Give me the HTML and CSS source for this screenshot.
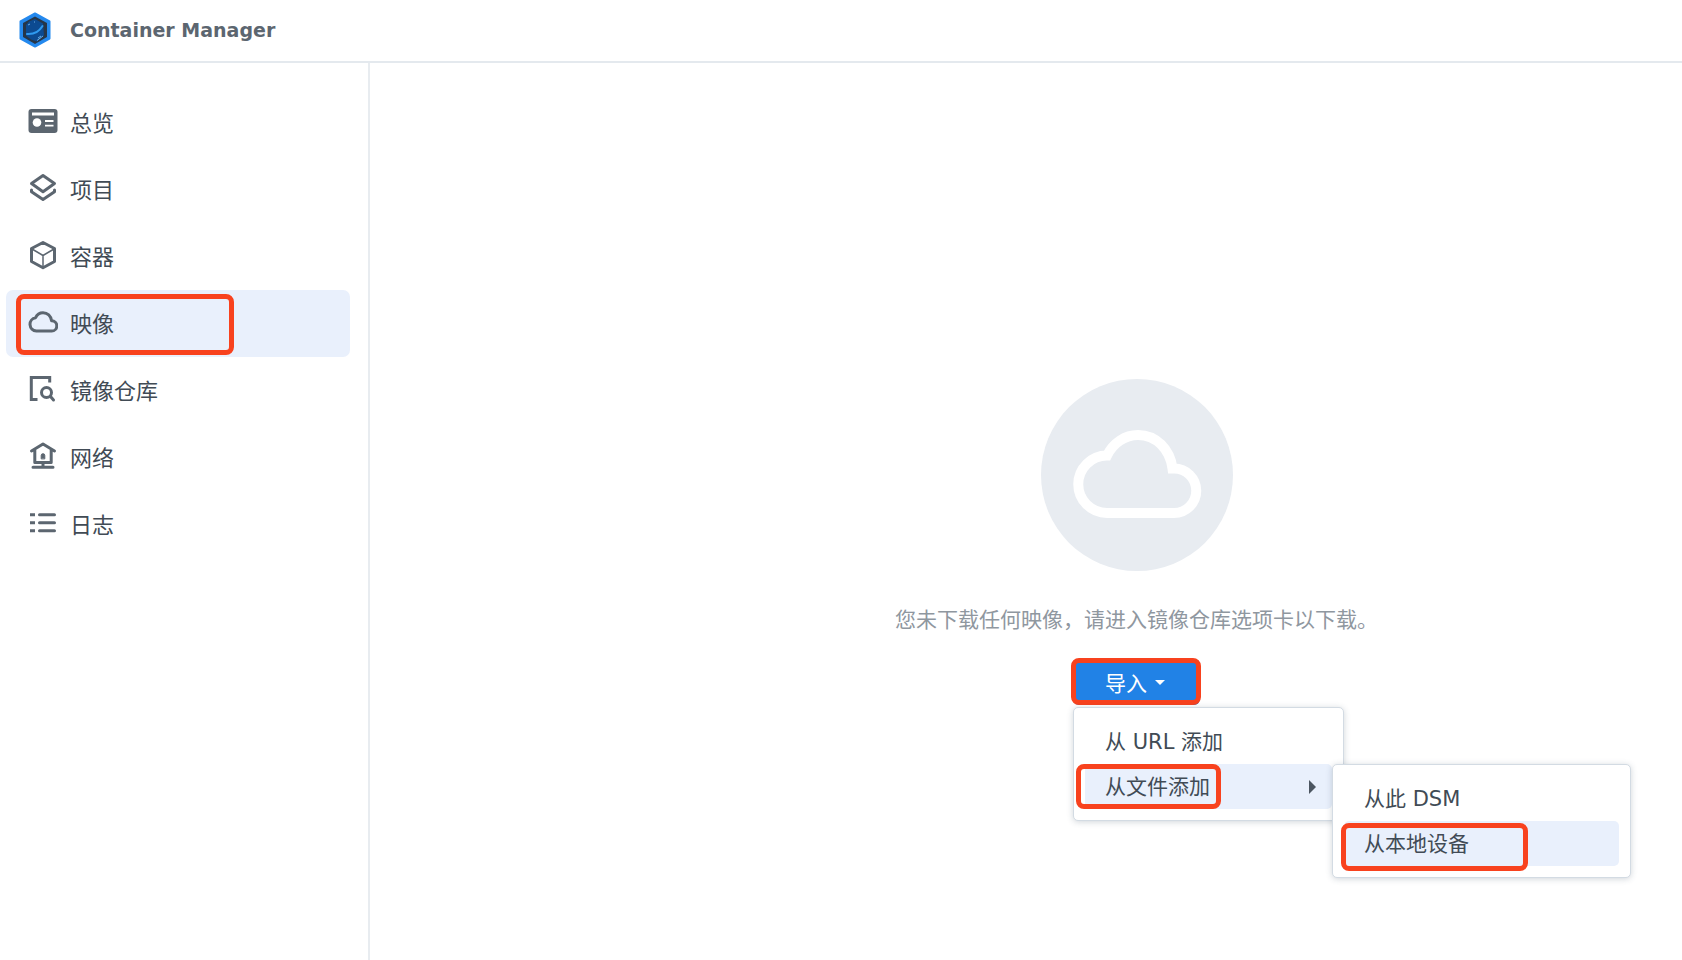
FILE: index.html
```html
<!DOCTYPE html>
<html lang="zh-CN">
<head>
<meta charset="utf-8">
<title>Container Manager</title>
<link rel="stylesheet" href="styles.css">
</head>
<body>
<div class="app">
  <header class="titlebar">
    <svg class="logo" viewBox="0 0 34 36" aria-hidden="true">
      <path d="M17 1.5 31.5 9.5v17L17 34.500 2.500 26.500v-17z" fill="#2489ee" stroke="#2489ee" stroke-width="2" stroke-linejoin="round"/>
      <path d="M17 4.500 29 11v14l-12 7-12-7V11z" fill="#263648"/>
      <path d="M11 9.500 17 7l8 4.500 1 12-7 6-6-2-5-4V13z" fill="#0c4a91"/>
      <path d="M9 22c7 .5 12-2 15.500-8" fill="none" stroke="#2f9af0" stroke-width="2" stroke-linecap="round"/>
      <path d="M19 28.500 25 24M20 26l3-2M10 13l2-1M16 10h1" fill="none" stroke="#69aee8" stroke-width="1"/>
    </svg>
    <h1 class="title">Container Manager</h1>
  </header>
  <div class="body">
    <nav class="sidebar">
      <a class="nav-item" href="#overview">
        <svg class="icon" viewBox="0 0 30 30" aria-hidden="true"><rect x="0.500" y="3" width="29" height="24" rx="3" fill="#5c6670"/><path d="M4 6.500h22v3H4z" fill="#fff"/><circle cx="9" cy="16.500" r="4.300" fill="#fff"/><path d="M17 15h8.500M17 19.700h8.500" stroke="#fff" stroke-width="1.800"/></svg>
        <span>总览</span>
      </a>
      <a class="nav-item" href="#project">
        <svg class="icon line" viewBox="0 0 30 30" aria-hidden="true"><path d="M15 2.500 26.500 10.500 15 18.700 3.500 10.500z"/><path d="M3.500 17v1.700L15 26.500l11.500-7.800V17"/></svg>
        <span>项目</span>
      </a>
      <a class="nav-item" href="#container">
        <svg class="icon line" viewBox="0 0 30 30" aria-hidden="true"><path d="M15 2.500 26.500 8.500v13L15 27.700 3.500 21.500v-13z"/><path d="M4 9l11 6.500L26 9M15 15.500V27" stroke-width="1.500"/></svg>
        <span>容器</span>
      </a>
      <a class="nav-item selected marked" href="#image" aria-current="page">
        <svg class="icon line" viewBox="0 0 30 30" aria-hidden="true"><path d="M7.600 10.700C9 7.500 11.700 5.700 15 5.700c4.500 0 7.800 3.300 8.600 8.100h.1a4.600 4.600 0 0 1 0 10.200H8.400a6.700 6.700 0 0 1-.8-13.300z"/></svg>
        <span>映像</span>
      </a>
      <a class="nav-item" href="#registry">
        <svg class="icon line" viewBox="0 0 30 30" aria-hidden="true"><path d="M9.500 25.500H3.300V3.500h18.400v5" stroke-linecap="butt" stroke-linejoin="miter"/><circle cx="18.500" cy="18.500" r="5" stroke-width="3"/><path d="M22.300 22.300 25.500 26" stroke-width="3"/></svg>
        <span>镜像仓库</span>
      </a>
      <a class="nav-item" href="#network">
        <svg class="icon line" viewBox="0 0 30 30" aria-hidden="true"><path d="M3.500 10 15 3l11.500 7M6.800 9v12.500h16.400V9M15 22v4M5 26.200h20"/><path d="M13.200 17.500v-3a1.800 1.800 0 0 1 3.600 0v3z" fill="#5c6670" stroke-width="1"/></svg>
        <span>网络</span>
      </a>
      <a class="nav-item" href="#log">
        <svg class="icon line" viewBox="0 0 30 30" aria-hidden="true"><path d="M2 6.700h5M2 14.700h5M2 22.700h5" stroke-linecap="butt" stroke-width="3"/><path d="M11.500 6.700h15M11.500 14.700h15M11.500 22.700h15" stroke-width="3"/></svg>
        <span>日志</span>
      </a>
    </nav>
    <main class="content">
      <section class="empty">
        <svg class="empty-art" viewBox="0 0 192 192" aria-hidden="true"><circle cx="96" cy="96" r="96" fill="#e8ecf1"/><path d="M66 76.500C72 64 84 56 97 56c18 0 32 14 34.500 33.500H133a22.200 22.200 0 0 1 0 44.500H66a28.700 28.700 0 0 1 0-57.500z" fill="none" stroke="#fff" stroke-width="10"/></svg>
        <p class="message">您未下载任何映像，请进入镜像仓库选项卡以下载。</p>
        <div class="dropdown">
          <button class="import marked" type="button" aria-haspopup="menu" aria-expanded="true">导入<span class="caret"></span></button>
          <div class="menu" role="menu">
            <button class="menu-item" type="button" role="menuitem">从 URL 添加</button>
            <div class="submenu-host">
              <button class="menu-item active has-submenu marked mark-file" type="button" role="menuitem" aria-haspopup="menu" aria-expanded="true">从文件添加<span class="arrow"></span></button>
              <div class="menu submenu" role="menu">
                <button class="menu-item" type="button" role="menuitem">从此 DSM</button>
                <button class="menu-item active marked mark-local" type="button" role="menuitem">从本地设备</button>
              </div>
            </div>
          </div>
        </div>
      </section>
    </main>
  </div>
</div>
</body>
</html>
```
FILE: styles.css
```css
* {
  box-sizing: border-box;
}

body {
  margin: 0;
  background: #fff;
  color: #414b55;
  font-family: "DejaVu Sans", "Noto Sans CJK SC", sans-serif;
}

button {
  border: 0;
  font: inherit;
  cursor: pointer;
}

.app {
  display: flex;
  flex-direction: column;
  min-height: 100vh;
}

.titlebar {
  display: flex;
  align-items: center;
  gap: 18px;
  padding: 12px 18px 13px;
  border-bottom: 2px solid #e4e9ee;
}

.logo {
  width: 34px;
  height: 36px;
}

.title {
  margin: 0;
  color: #5c6670;
  font-size: 19px;
  line-height: 24px;
}

.body {
  display: flex;
  flex: 1;
}

.sidebar {
  display: flex;
  flex-direction: column;
  flex: 0 0 370px;
  padding: 26px 18px 26px 6px;
  border-right: 2px solid #e8ecf0;
}

.nav-item {
  position: relative;
  display: flex;
  align-items: center;
  gap: 12px;
  height: 67px;
  padding: 0 22px 3px;
  border-radius: 7px;
  color: #414b55;
  font-family: "Noto Sans CJK SC", sans-serif;
  font-size: 22px;
  line-height: 32px;
  text-decoration: none;
}

.selected,
.active {
  background: #e9f0fc;
}

.icon {
  width: 30px;
  height: 30px;
}

.line {
  fill: none;
  stroke: #5c6670;
  stroke-width: 3;
  stroke-linecap: round;
  stroke-linejoin: round;
}

.content {
  display: flex;
  flex: 1;
  align-items: center;
  justify-content: center;
  padding: 61px 0 0 221px;
}

.empty {
  display: flex;
  flex-direction: column;
  align-items: center;
}

.empty-art {
  width: 192px;
  height: 192px;
}

.message {
  margin: 31px 0 25px;
  color: #8f979f;
  font-family: "Noto Sans CJK SC", sans-serif;
  font-size: 21px;
  line-height: 32px;
}

.dropdown {
  position: relative;
}

.import {
  position: relative;
  display: flex;
  align-items: center;
  gap: 8px;
  height: 46px;
  padding: 0 35px 0 32px;
  border-radius: 6px;
  background: #2182e6;
  color: #fff;
  font-family: "Noto Sans CJK SC", sans-serif;
  font-size: 21px;
}

.caret {
  border: 5px solid transparent;
  border-top-color: #fff;
  border-bottom: 0;
}

.menu {
  position: absolute;
  top: 100%;
  left: 0;
  width: 271px;
  margin-top: 2px;
  padding: 11px;
  border: 1px solid #d3dbe3;
  border-radius: 5px;
  background: #fff;
  box-shadow: 0 1px 6px rgba(60, 80, 100, 0.24);
}

.submenu {
  top: 0;
  left: 100%;
  width: 299px;
  margin-top: 0;
}

.submenu-host {
  position: relative;
}

.menu-item {
  position: relative;
  display: flex;
  align-items: center;
  justify-content: space-between;
  width: 100%;
  height: 45px;
  padding: 0 20px;
  border-radius: 5px;
  background: #fff;
  color: #414b55;
  font-size: 21px;
  line-height: 32px;
  white-space: pre;
}

.menu-item.active {
  background: #e9f0fc;
}

.menu-item.has-submenu {
  padding-right: 16px;
}

.arrow {
  border: 7px solid transparent;
  border-left-color: #4c5661;
  border-right: 0;
}

/* Callout frames around the steps to follow */
.marked::after {
  content: "";
  position: absolute;
  inset: 4px 116px 2px 10px;
  border: 5px solid #f8421e;
  border-radius: 8px;
  pointer-events: none;
}

.import.marked::after {
  inset: -1px -1px 0 -2px;
}

.mark-file.marked::after {
  inset: 0 111px 0 -9px;
}

.mark-local.marked::after {
  inset: 2px 91px -5px -3px;
}
```
